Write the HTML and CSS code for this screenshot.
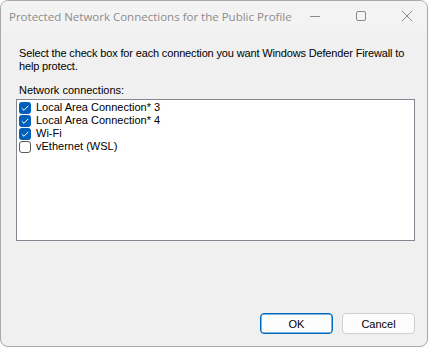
FILE: index.html
```html
<!DOCTYPE html>
<html>
  <head>
    <meta charset="utf-8">
    <title>Protected Network Connections</title>
    <link rel="stylesheet" href="styles.css">
  </head>
  <body>
    <div class="window">
      <div class="titlebar">
        <div class="title">Protected Network Connections for the Public Profile</div>
        <div class="caption">
          <div class="cbtn">
            <svg width="10" height="10" viewBox="0 0 10 10"><path d="M0 5.5H10" stroke="#8a8a8a" stroke-width="1"/></svg>
          </div>
          <div class="cbtn">
            <svg width="10" height="10" viewBox="0 0 10 10"><rect x="0.5" y="0.5" width="9" height="9" rx="1.5" fill="none" stroke="#8a8a8a" stroke-width="1"/></svg>
          </div>
          <div class="cbtn">
            <svg width="10" height="10" viewBox="0 0 10 10"><path d="M0 0L10 10M10 0L0 10" stroke="#8a8a8a" stroke-width="1"/></svg>
          </div>
        </div>
      </div>
      <div class="content">
        <p class="intro">Select the check box for each connection you want Windows Defender Firewall to help protect.</p>
        <div class="label">Network connections:</div>
        <div class="listbox">
          <div class="item"><span class="box checked"></span>Local Area Connection* 3</div>
          <div class="item"><span class="box checked"></span>Local Area Connection* 4</div>
          <div class="item"><span class="box checked"></span>Wi-Fi</div>
          <div class="item"><span class="box"></span>vEthernet (WSL)</div>
        </div>
        <div class="buttons">
          <button class="btn default">OK</button>
          <button class="btn">Cancel</button>
        </div>
      </div>
    </div>
  </body>
</html>
```

FILE: styles.css
```css
body {
  margin: 0;
  background: #fbfbfb;
  font-family: "Liberation Sans", Arial, sans-serif;
  font-size: 11px;
  color: #000;
}

.window {
  width: 428px;
  height: 347px;
  box-sizing: border-box;
  border: 1px solid #a9a9a9;
  border-radius: 8px;
  overflow: hidden;
  background: #f0f0f0;
  display: flex;
  flex-direction: column;
}

.titlebar {
  height: 30px;
  background: #f3f3f3;
  display: flex;
  align-items: center;
  flex-shrink: 0;
}

.title {
  flex: 1;
  padding-left: 8px;
  font-family: "Open Sans", "Noto Sans", sans-serif;
  font-size: 11.5px;
  color: #8c8c8c;
  white-space: nowrap;
  margin-top: 1px;
}

.caption {
  display: flex;
  align-self: stretch;
}

.cbtn {
  width: 46px;
  display: flex;
  align-items: center;
  justify-content: center;
}

.content {
  flex: 1;
  display: flex;
  flex-direction: column;
  padding: 16px 12px 12px 15px;
}

.intro {
  margin: 0 0 11px 3px;
  line-height: 13px;
  letter-spacing: -0.15px;
}

.label {
  margin-left: 3px;
  line-height: 13px;
}

.listbox {
  margin-top: 2px;
  height: 142px;
  box-sizing: border-box;
  border: 1px solid #828790;
  background: #fff;
  padding: 1px 0 0 1px;
}

.item {
  height: 13px;
  line-height: 13px;
  display: flex;
  align-items: center;
  gap: 5px;
}

.box {
  width: 12px;
  height: 12px;
  box-sizing: border-box;
  border: 1px solid #5a5a5a;
  border-radius: 3px;
  background: #fff;
  margin-left: 1px;
}

.box.checked {
  border: none;
  background: #005fb8 url("data:image/svg+xml;utf8,<svg xmlns='http://www.w3.org/2000/svg' width='12' height='12'><path d='M2.8 6.2L5 8.3L9.3 3.8' fill='none' stroke='white' stroke-width='1'/></svg>") no-repeat center;
}

.buttons {
  margin-top: auto;
  display: flex;
  justify-content: flex-end;
  gap: 9px;
}

.btn {
  width: 73px;
  height: 21px;
  box-sizing: border-box;
  font-family: "Liberation Sans", Arial, sans-serif;
  font-size: 11px;
  color: #000;
  background: #fdfdfd;
  border: 1px solid #d0d0d0;
  border-radius: 4px;
  padding: 0;
}

.btn.default {
  border: 1px solid #0067c0;
  box-shadow: inset 0 0 0 0.5px #0067c0;
}
```
